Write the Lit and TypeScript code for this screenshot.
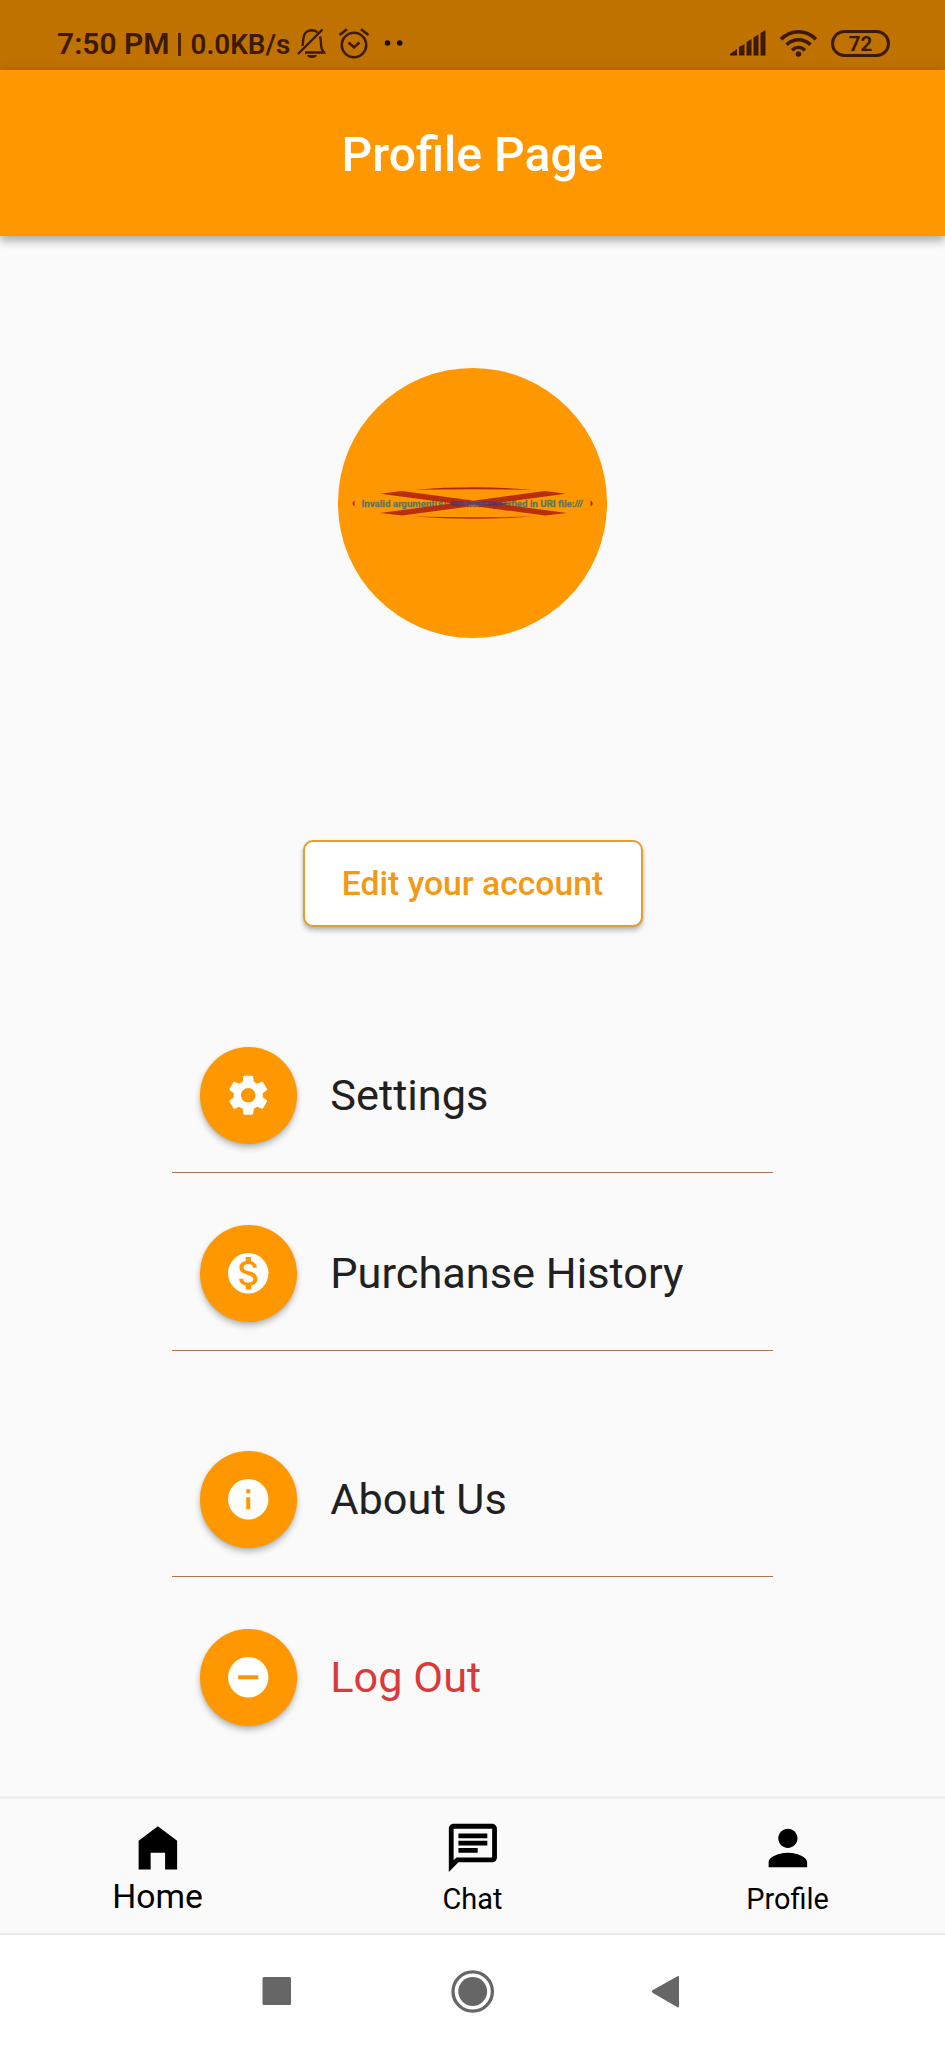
import { LitElement, html, css, svg } from "lit";
import { customElement, property } from "lit/decorators.js";

const glyphs: Record<string, unknown> = {
  settings: svg`<path d="M19.14 12.94c.04-.3.06-.61.06-.94 0-.32-.02-.64-.07-.94l2.03-1.58c.18-.14.23-.41.12-.61l-1.92-3.32c-.12-.22-.37-.29-.59-.22l-2.39.96c-.5-.38-1.03-.7-1.62-.94l-.36-2.54c-.04-.24-.24-.41-.48-.41h-3.84c-.24 0-.43.17-.47.41l-.36 2.54c-.59.24-1.13.57-1.62.94l-2.39-.96c-.22-.08-.47 0-.59.22L2.740 8.870c-.12.21-.08.47.12.61l2.030 1.580c-.05.3-.09.63-.09.94s.02.64.07.94l-2.030 1.580c-.18.14-.23.41-.12.61l1.920 3.320c.12.22.37.29.59.22l2.390-.96c.5.38 1.030.7 1.620.94l.36 2.540c.05.24.24.41.48.41h3.840c.24 0 .44-.17.47-.41l.36-2.540c.59-.24 1.130-.56 1.620-.94l2.390.96c.22.08.47 0 .59-.22l1.920-3.320c.12-.22.07-.47-.12-.61l-2.010-1.580zM12 15.600c-1.980 0-3.600-1.620-3.600-3.600s1.620-3.600 3.600-3.600 3.600 1.620 3.600 3.600-1.620 3.600-3.600 3.600z"/>`,
  money: svg`<path fill-rule="evenodd" d="M12 2a10 10 0 1 0 0 20a10 10 0 0 0 0-20zM13.410 18.090V20h-2.670v-1.930c-1.710-.36-3.160-1.460-3.270-3.400h1.960c.1 1.050.82 1.870 2.650 1.870 1.960 0 2.400-.98 2.400-1.590 0-.83-.44-1.610-2.670-2.140-2.480-.6-4.180-1.620-4.180-3.670 0-1.720 1.390-2.840 3.110-3.210V4h2.670v1.950c1.860.45 2.790 1.860 2.850 3.390H14.300c-.05-1.110-.64-1.870-2.220-1.870-1.500 0-2.400.68-2.400 1.640 0 .84.65 1.390 2.670 1.910s4.180 1.390 4.180 3.910c-.01 1.830-1.380 2.830-3.120 3.160z"/>`,
  info: svg`<path fill-rule="evenodd" d="M12 2a10 10 0 1 0 0 20a10 10 0 0 0 0-20zM13 17h-2v-6h2zM13 9h-2V7h2z"/>`,
  minus: svg`<path fill-rule="evenodd" d="M12 2a10 10 0 1 0 0 20a10 10 0 0 0 0-20zM17 13H7v-2h10z"/>`,
  home: svg`<path d="M12 3 4 9v12h5v-7h6v7h5V9z"/>`,
  chat: svg`<path d="M4 4h16v12H5.170L4 17.170V4m0-2c-1.100 0-1.990.9-1.990 2L2 22l4-4h14c1.100 0 2-.9 2-2V4c0-1.100-.9-2-2-2H4zm2 10h8v2H6v-2zm0-3h12v2H6V9zm0-3h12v2H6V6z"/>`,
  person: svg`<path d="M12 12c2.210 0 4-1.790 4-4s-1.790-4-4-4-4 1.790-4 4 1.790 4 4 4zm0 2c-2.670 0-8 1.340-8 4v2h16v-2c0-2.660-5.330-4-8-4z"/>`,
};

@customElement("app-glyph")
class AppGlyph extends LitElement {
  @property() name = "";
  static styles = css`
    :host { display: block; }
    svg { display: block; width: 100%; height: 100%; fill: currentColor; }
  `;
  render() {
    return html`<svg viewBox="0 0 24 24">${glyphs[this.name]}</svg>`;
  }
}

@customElement("status-bar")
class StatusBar extends LitElement {
  static styles = css`
    :host { display: flex; height: 70px; box-sizing: border-box; padding: 27px 55px 11px 57px; background: #c07200; color: #3d1a05; align-items: center; }
    svg { display: block; flex: none; overflow: visible; }
    .time { font-weight: 600; font-size: 30px; width: 114px; white-space: nowrap; line-height: 32px; padding-top: 2px; }
    .bar { width: 3px; height: 23px; background: #4f2403; margin: 3px 0 0 7px; }
    .rate { font-weight: 600; font-size: 27.800px; margin-left: 9.500px; width: 100px; white-space: nowrap; line-height: 32px; padding-top: 3px; }
    .bell { margin-left: 6px; }
    .alarm { margin-left: 12px; }
    .dots { margin-left: 14px; }
    .space { flex: 1; }
    .wifi { margin: 0 14px; }
    .battery { width: 59px; height: 27px; box-sizing: border-box; border: 3px solid #3d1a05; border-radius: 13.500px; font-size: 20.500px; line-height: 23px; font-weight: 700; text-align: center; }
  `;
  render() {
    return html`
      <span class="time">7:50 PM</span><span class="bar"></span><span class="rate">0.0KB/s</span>
      <svg class="bell" width="29" height="32" viewBox="0 0 29 32" fill="none" stroke="#3d1a05" stroke-width="2.400">
        <path d="M20.500 5.500C18 2.800 12 2.300 8.800 5.500C5.600 9 6.500 14 5.500 19M23 9.500c1.500 4 .5 8.500 1.800 12.500l2.200 3.500H8"/><path d="M25.500 2.500 1 27"/><path d="M10 28h10q-1 3-5 3t-5-3z" fill="#3d1a05" stroke="none"/>
      </svg>
      <svg class="alarm" width="32" height="32" viewBox="0 0 32 32" fill="none" stroke="#3d1a05" stroke-width="2.600">
        <circle cx="16" cy="18" r="12.200"/><path d="M10.500 15.500l5.500 4.700 5.500-4.700M1.500 8 9 2.200M30.500 8 23 2.200"/>
      </svg>
      <svg class="dots" width="20" height="6" viewBox="0 0 20 6" fill="#1c0c00"><circle cx="3.500" cy="3" r="2.800"/><circle cx="15.700" cy="3" r="2.800"/></svg>
      <span class="space"></span>
      <svg width="36" height="26" viewBox="0 0 36 26" fill="#3d1a05">
        <path d="M0 25.500v-1.500l7-5v6.500zM9 25.500V17l5.500-2.800v11.300zM16.500 25.500V12l5-3v16.500zM23.500 25.500V7.500l5-3v21zM30.500 25.500V3l5-3v25.500z"/>
      </svg>
      <svg class="wifi" width="37" height="27" viewBox="0 0 37 27" fill="none" stroke="#3d1a05" stroke-width="3.600">
        <path d="M1 9.300C11-.8 26-.8 36 9.300M6.500 14.800c7-6.700 17-6.700 24 0M12 20.200c4-3.700 9-3.700 13 0"/><circle cx="18.500" cy="24" r="2.800" fill="#3d1a05" stroke="none"/>
      </svg>
      <span class="battery">72</span>
    `;
  }
}

@customElement("menu-row")
class MenuRow extends LitElement {
  @property() icon = "";
  @property() label = "";
  @property({ type: Boolean, reflect: true }) danger = false;
  @property({ type: Boolean, reflect: true }) last = false;
  static styles = css`
    :host { display: flex; align-items: center; box-sizing: border-box; height: 153px; padding: 0 0 1px 28.300px; margin: 0 172px; border-bottom: 1px solid #a87558; color: #212121; font-size: 43.300px; }
    :host([last]) { border-bottom-color: transparent; }
    :host([danger]) { color: #d93a3a; }
    .disc { width: 96.500px; height: 96.500px; border-radius: 50%; background: #ff9800; color: #fff; display: grid; place-items: center; box-shadow: 0 4px 6px rgba(0,0,0,.24), 0 1px 3px rgba(0,0,0,.1); }
    app-glyph { width: 48.500px; height: 48.500px; }
    .label { margin: 1px 0 0 33.500px; line-height: 50px; white-space: nowrap; }
  `;
  render() {
    return html`<span class="disc"><app-glyph name=${this.icon}></app-glyph></span><span class="label">${this.label}</span>`;
  }
}

@customElement("app-root")
class AppRoot extends LitElement {
  static styles = css`
    :host { display: flex; flex-direction: column; height: 2048px; width: 945px; background: #fafafa; font-family: Roboto, "Noto Sans", sans-serif; overflow: hidden; }
    .appbar { height: 166px; box-sizing: border-box; padding-top: 3px; background: #ff9800; color: #fff; display: flex; justify-content: center; align-items: center; font-size: 48.100px; font-weight: 500; box-shadow: 0 5px 8px rgba(0,0,0,.22), 0 2px 12px rgba(0,0,0,.16); }
    .content { flex: 1; display: flex; flex-direction: column; }
    .avatar { align-self: center; margin-top: 132px; width: 269.500px; height: 269.500px; border-radius: 50%; background: #ff9800; flex: none; }
    .avatar svg { display: block; }
    .broken { font: 700 9.500px Roboto, sans-serif; }
    .edit { align-self: center; margin-top: 202.500px; width: 340px; height: 87px; box-sizing: border-box; border: 2.500px solid #e99c26; border-radius: 10px; background: #fff; color: #f29a16; font: 500 33.700px/82px Roboto, sans-serif; padding: 0; text-align: center; box-shadow: 0 4px 5px rgba(0,0,0,.22), 0 1px 3px rgba(0,0,0,.1); }
    .menu { display: flex; flex-direction: column; margin-top: 93px; gap: 25px; }
    .gap { margin-top: 48px; }
    .tabs { height: 139px; box-sizing: border-box; border-top: 3px solid #f0f0f0; border-bottom: 2px solid #ececec; display: grid; grid-template-columns: repeat(3, 1fr); justify-items: center; color: #000; }
    .tab { display: flex; flex-direction: column; align-items: center; padding-top: 19.500px; font-size: 28.900px; line-height: 36px; }
    .tab app-glyph { width: 57.750px; height: 57.750px; }
    .tab span { margin-top: 5px; }
    .tab.on { font-size: 33.700px; }
    .tab.on span { margin-top: 3px; }
    .system { height: 113px; background: #fefefe; display: flex; align-items: center; }
    .system svg { display: block; }
  `;
  render() {
    return html`
      <status-bar></status-bar>
      <header class="appbar">Profile Page</header>
      <main class="content">
        <div class="avatar">
          <svg width="269.500" height="269.500" viewBox="338 368 269.500 269.500">
            <text class="broken" x="361.500" y="506.800" textLength="221.500" lengthAdjust="spacingAndGlyphs" fill="#55756a" stroke="#6f7a4a" stroke-width=".3">Invalid argument(s): No host specified in URI file:///</text>
            <g fill="#b3260f">
              <path d="M414 489.700Q473.500 485 533 489.700Q473.500 488.800 414 489.700zM414 516.600Q473.500 521 533 516.600Q473.500 518 414 516.600z"/>
              <path d="M380 493.700 402 491 567 513 545 515.500zM566 493.700 545 491 380 513 402 515.500z" fill-opacity=".93"/>
              <path d="M354.500 500.500v6q-4-3 0-6zM590.500 500.500v6q4.500-3 0-6z"/>
            </g>
            <path d="M449 504 452 501.500 473 501 494 501.500 512 504 494 506 473 504.800 455 506z" fill="#4d3570" fill-opacity=".8"/>
          </svg>
        </div>
        <button class="edit">Edit your account</button>
        <div class="menu">
          <menu-row icon="settings" label="Settings"></menu-row>
          <menu-row icon="money" label="Purchanse History"></menu-row>
          <menu-row class="gap" icon="info" label="About Us"></menu-row>
          <menu-row icon="minus" label="Log Out" danger last></menu-row>
        </div>
      </main>
      <nav class="tabs">
        <div class="tab on"><app-glyph name="home"></app-glyph><span>Home</span></div>
        <div class="tab"><app-glyph name="chat"></app-glyph><span>Chat</span></div>
        <div class="tab"><app-glyph name="person"></app-glyph><span>Profile</span></div>
      </nav>
      <footer class="system">
        <svg width="945" height="113" viewBox="0 1935 945 113" fill="#666">
          <rect x="262.500" y="1977" width="28.500" height="28" rx="1.500"/>
          <circle cx="472.700" cy="1991.500" r="14.400"/><circle cx="472.700" cy="1991.500" r="19.700" fill="none" stroke="#666" stroke-width="3.300"/>
          <path d="M652.500 1990.300 677.500 1976.200q1.500-.7 1.500 1v29q0 1.700-1.500 1L652.500 1992.800q-1.500-1.200 0-2.500z"/>
        </svg>
      </footer>
    `;
  }
}
